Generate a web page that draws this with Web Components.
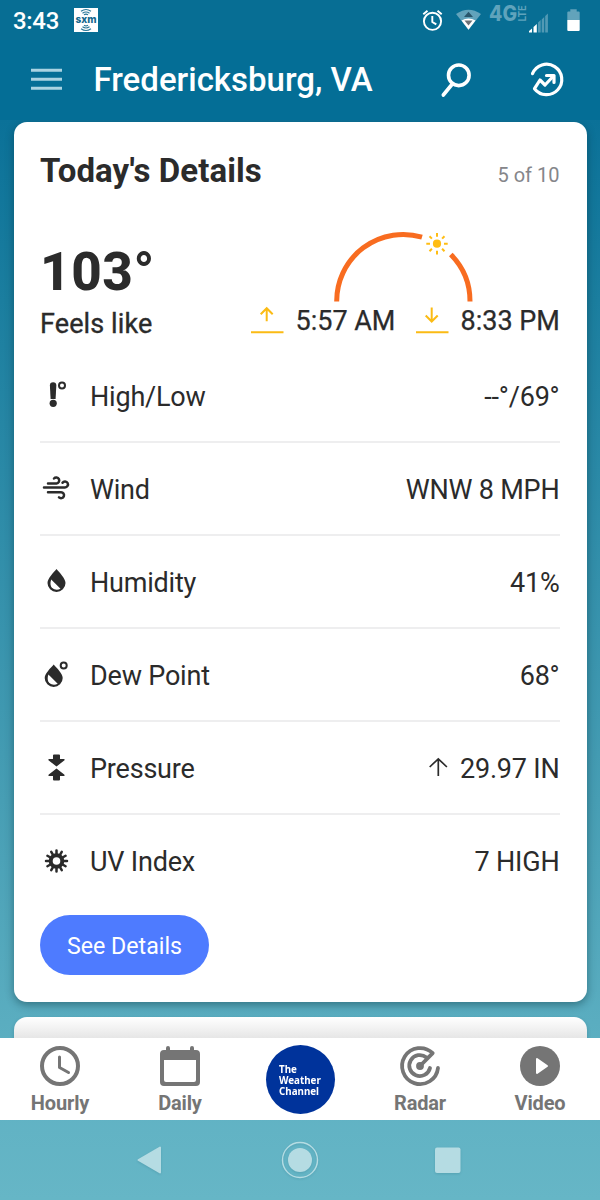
<!DOCTYPE html>
<html lang="en">
<head>
<meta charset="utf-8">
<title>Weather details</title>
<style>
html, body { margin: 0; height: 100%; }
body { font-family: Roboto, "Liberation Sans", sans-serif; color: #2b2b2b; }
</style>
</head>
<body>
<weather-app></weather-app>
<script>
const define = (name, html) => {
  const template = document.createElement('template');
  template.innerHTML = '<style>*{box-sizing:border-box}svg{display:block;flex:none;overflow:visible}</style>' + html;
  customElements.define(name, class extends HTMLElement {
    constructor() {
      super();
      this.attachShadow({ mode: 'open' }).append(template.content.cloneNode(true));
    }
  });
};

define('status-bar', `
<style>
:host { display: flex; height: 40px; padding: 0 19px 0 13px; color: #fff; background: #076e94; }
time { font-size: 24px; font-weight: 500; line-height: 42px; width: 61px; letter-spacing: -.3px; white-space: nowrap; }
.left { flex: 1; }
</style>
<time>3:43</time>
<svg class="sxm" width="24" height="40" viewBox="74 0 24 40">
  <rect x="74" y="8" width="24" height="24" fill="#fff"/>
  <g fill="none" stroke="#2a7899" stroke-width="1.1">
    <path d="M81 11.3q5-3.5 10 0M82.500 13.200q3.500-2.300 7 0M84 14.800q2-1.400 4 0M81 28.700q5 3.500 10 0M82.500 26.800q3.500 2.300 7 0M84 25.200q2 1.400 4 0"/>
  </g>
  <text x="86" y="23" text-anchor="middle" textLength="21" lengthAdjust="spacingAndGlyphs" font-family="Inter, sans-serif" font-size="10.500" font-weight="800" fill="#15698e">sxm</text>
</svg>
<span class="left"></span>
<svg width="159" height="40" viewBox="422 0 159 40">
  <g fill="none" stroke="#fff" stroke-width="1.900">
    <circle cx="432.500" cy="21.300" r="8.600"/>
    <path d="M432.300 16v6l4 2.400M423.300 14.300l4.200-3.600M441.700 14.300l-4.200-3.600"/>
  </g>
  <path d="M456 14q12.500-8.600 25 0L468.500 29.800z" fill="#62a3bb"/>
  <path d="M461.500 20.500q7-4 14 0l-7 9.300z" fill="#fff"/>
  <path d="M468.500 11.800l4.500 5.200h-9z" fill="#29566b"/>
  <path d="M464.500 20.500h8l-4 5z" fill="#6b7075"/>
  <g fill="#5fa3bc">
    <text x="489" y="21" font-size="21" font-weight="800" font-family="Inter, sans-serif" textLength="28" lengthAdjust="spacingAndGlyphs">4G</text>
    <text transform="translate(525.500 21.500) rotate(-90)" font-size="10" font-weight="700" textLength="16" lengthAdjust="spacingAndGlyphs">LTE</text>
  </g>
  <path d="M529 32.500v-1.500l3-2.500v4zM533.500 32.500v-5.500l3.300-3v8.500z" fill="#fff"/>
  <path d="M538 32.500v-10l2.700-2.500v12.500zM541.700 32.500v-13l2.500-2.500v15.500zM545.200 32.500v-16.500l2.700-2.500v19z" fill="#5199b4"/>
  <path d="M567.300 20v-7.500q0-1 1-1h2v-2.300h6.400v2.300h2q1 0 1 1V20z" fill="#62a3bb"/>
  <path d="M567.300 20h12.400v10q0 1-1 1h-10.400q-1 0-1-1z" fill="#fff"/>
</svg>`);

define('app-header', `
<style>
:host { display: flex; align-items: center; height: 80px; padding: 0 36px 0 31px; color: #fff; background: #046e96; }
h1 { flex: 1; margin: 0 0 0 30.500px; font-size: 33px; font-weight: 500; line-height: 80px; height: 80px; white-space: nowrap; }
.go { margin-left: 60px; }
</style>
<svg width="32" height="80" viewBox="31 40 32 80"><path d="M31 70.300h31M31 79.300h31M31 88.300h31" stroke="#a9d3e2" stroke-width="3"/></svg>
<h1>Fredericksburg, VA</h1>
<svg width="30" height="80" viewBox="441 40 30 80" fill="none" stroke="#fff" stroke-width="3.600" stroke-linecap="round"><circle cx="458.800" cy="75.300" r="10.300"/><path d="M452.300 84l-9 11"/></svg>
<svg class="go" width="33" height="80" viewBox="531 40 33 80" fill="none" stroke="#fff" stroke-width="3.200" stroke-linecap="round" stroke-linejoin="round"><path d="M532.500 73.700A15.200 15.200 0 1 1 534.500 88.700L540 80l5 5 8.500-9"/><path d="M546.500 75.500h7.500v7"/></svg>`);

define('sun-times', `
<style>
:host { display: flex; flex-direction: column; width: 310px; }
.times { display: flex; align-items: flex-start; justify-content: flex-end; font-size: 27px; font-weight: 400; line-height: 33px; white-space: nowrap; -webkit-text-stroke: .25px; }
.rise { width: 99px; margin: 0 21px 0 12px; }
.set { width: 99px; margin-left: 12px; }
</style>
<svg width="310" height="80" viewBox="250 225 310 80">
  <g fill="none" stroke="#f86c20" stroke-width="5"><path d="M336.700 301.400A66.500 66.500 0 0 1 422 237.200M450.800 254.500A66.500 66.500 0 0 1 470 301.400"/></g>
  <circle cx="437" cy="243.700" r="4.100" fill="#ffbd13"/>
  <path d="M437 233v3.700M437 250.700v3.700M426.300 243.700h3.700M444 243.700h3.700M429.500 236.200l2.400 2.400M442.100 248.800l2.400 2.400M444.500 236.200l-2.400 2.400M431.900 248.800l-2.400 2.400" stroke="#ffbd13" stroke-width="2"/>
</svg>
<div class="times">
  <svg width="33" height="32" viewBox="251 305 33 32" fill="none" stroke="#fbbb14" stroke-width="2"><path d="M251 332.300h32.500M266.700 321.300v-13M260.700 314.200l6-6 6 6"/></svg>
  <span class="rise">5:57 AM</span>
  <svg width="33" height="32" viewBox="416 305 33 32" fill="none" stroke="#fbbb14" stroke-width="2"><path d="M416 332.300h32.500M431.700 307.500v13.500M425.700 315.500l6 6 6-6"/></svg>
  <span class="set">8:33 PM</span>
</div>`);

define('detail-row', `
<style>
:host { display: flex; align-items: center; height: 93.100px; border-bottom: 2px solid #eeeeef; font-size: 27px; line-height: 32px; letter-spacing: -.2px; white-space: nowrap; }
:host([last]) { border-bottom-color: transparent; }
.icon { width: 50px; }
.label { flex: 1; padding-top: 3px; }
.value { display: flex; align-items: center; padding-top: 3px; }
</style>
<span class="icon"><slot name="icon"></slot></span><span class="label"><slot name="label"></slot></span><span class="value"><slot></slot></span>`);

define('details-card', `
<style>
:host { display: flex; flex-direction: column; flex: none; height: 879.500px; padding: 0 27px 0 26.500px; background: #fff; border-radius: 13px; box-shadow: 0 3px 8px rgba(0,40,50,.42); }
header { display: flex; justify-content: space-between; align-items: baseline; height: 98px; padding-top: 28px; white-space: nowrap; }
h2 { margin: 0; font-size: 33px; line-height: 42px; font-weight: 700; letter-spacing: .08px; }
.count { font-size: 20px; color: #85868a; }
.summary { display: flex; justify-content: space-between; height: 129.700px; padding-top: 5px; }
.temp { margin-top: 20px; font-size: 53px; line-height: 54px; font-weight: 800; letter-spacing: .6px; white-space: nowrap; }
.feels { margin-top: 10px; font-size: 27px; line-height: 30px; -webkit-text-stroke: .35px; letter-spacing: .1px; white-space: nowrap; }
button { align-self: flex-start; width: 169px; height: 60px; margin-top: 7px; padding: 2px 0 0; border: 0; border-radius: 30px; color: #fff; background: #4e7bff; font: 400 23.200px Roboto, sans-serif; white-space: nowrap; }
</style>
<header><h2>Today's Details</h2><span class="count">5 of 10</span></header>
<div class="summary">
  <div><div class="temp">103°</div><div class="feels">Feels like</div></div>
  <sun-times></sun-times>
</div>
<detail-row>
  <svg slot="icon" width="32" height="30" viewBox="40 381 32 30"><path d="M49.900 386.500q0-3.200 3.200-3.200t3.200 3.200l-.7 13.500h-5z" fill="#2b2b2b"/><circle cx="53.200" cy="404.300" r="3.600" fill="#2b2b2b"/><circle cx="62" cy="386.500" r="3" fill="none" stroke="#2b2b2b" stroke-width="2"/></svg>
  <span slot="label">High/Low</span>--°/69°
</detail-row>
<detail-row>
  <svg slot="icon" width="32" height="30" viewBox="40 473.500 32 30" fill="none" stroke="#2b2b2b" stroke-width="2.500" stroke-linecap="round"><path d="M48 484h8.500a3 3 0 1 0-2.500-5M44 487.900h21a3 3 0 1 0-2.500-4.700M48 492.700h13a3 3 0 1 1-2 5.200"/></svg>
  <span slot="label">Wind</span>WNW 8 MPH
</detail-row>
<detail-row>
  <svg slot="icon" width="32" height="30" viewBox="40 566.500 32 30"><path d="M56.500 569.500c3 3.500 9 9.500 9 14a9 9 0 0 1-18 0c0-4.500 6-10.500 9-14z" fill="#2b2b2b"/><path d="M51.200 580l9.300 9.300c-4.500 2.500-10 0-10-5q0-2.300.7-4.300z" fill="#fff"/></svg>
  <span slot="label">Humidity</span>41%
</detail-row>
<detail-row>
  <svg slot="icon" width="32" height="30" viewBox="40 659 32 30"><path d="M53.700 663.500c3 3.500 9 9 9 13.500a9 9 0 0 1-18 0c0-4.500 6-10 9-13.500z" fill="#2b2b2b"/><path d="M48.400 673.500l9.300 9.300c-4.500 2.500-10 0-10-5q0-2.300.7-4.300z" fill="#fff"/><circle cx="63.700" cy="664.500" r="3" fill="none" stroke="#2b2b2b" stroke-width="2"/></svg>
  <span slot="label">Dew Point</span>68°
</detail-row>
<detail-row>
  <svg slot="icon" width="32" height="30" viewBox="40 752.500 32 30"><path d="M53 755q0-1 1-1h5q1 0 1 1v3.500h4q1.200.500.200 1.500l-7.700 6-7.700-6q-1-1 .200-1.500h4zM53 779q0 1 1 1h5q1 0 1-1v-3.500h4q1.200-.500.200-1.500l-7.700-6-7.700 6q-1 1 .200 1.500h4z" fill="#2b2b2b"/></svg>
  <span slot="label">Pressure</span><svg width="32" height="26" viewBox="428 755.500 32 26" fill="none" stroke="#2b2b2b" stroke-width="1.700"><path d="M438.300 775.500v-17M429.700 766.500l8.600-8.200 8.600 8.200"/></svg><span>29.97 IN</span>
</detail-row>
<detail-row last>
  <svg slot="icon" width="32" height="30" viewBox="40 845.500 32 30" fill="none" stroke="#2b2b2b"><circle cx="56.500" cy="860.500" r="5.800" stroke-width="4"/><g stroke-width="2.500" stroke-linecap="round"><path d="M56.500 850v21M46 860.500h21M51.250 851.400l10.500 18.200M47.400 855.250l18.200 10.500M47.400 865.750l18.200-10.500M51.250 869.600l10.500-18.200"/></g><circle cx="56.500" cy="860.500" r="3.800" fill="#fff" stroke="none"/></svg>
  <span slot="label">UV Index</span>7 HIGH
</detail-row>
<button>See Details</button>`);

define('nav-item', `
<style>
:host { display: flex; flex-direction: column; align-items: center; width: 120px; padding-top: 8px; color: #757575; font-size: 20px; font-weight: 700; line-height: 24px; letter-spacing: -.15px; }
.name { margin-top: 5px; white-space: nowrap; }
</style>
<slot name="icon"></slot><span class="name"><slot></slot></span>`);

define('bottom-nav', `
<style>
:host { display: flex; height: 82px; background: #fff; }
.brand { display: flex; justify-content: center; width: 120px; padding-top: 7px; }
.disc { width: 69px; height: 69px; padding: 18px 0 0 13.500px; border-radius: 50%; background: #00339b; color: #fff; font: 700 11px/11px "Noto Sans", sans-serif; white-space: nowrap; }
.words { transform: scaleX(.89); transform-origin: left; }
</style>
<nav-item><svg slot="icon" width="40" height="40" viewBox="0 0 40 40" fill="none" stroke="#757575"><circle cx="20" cy="20" r="18" stroke-width="4"/><path d="M19.500 11v10.500l9 5" stroke-width="3" stroke-linecap="round" stroke-linejoin="round"/></svg>Hourly</nav-item>
<nav-item><svg slot="icon" width="40" height="40" viewBox="0 0 40 40"><path fill-rule="evenodd" fill="#757575" d="M6 2q0-2 2-2t2 2v2h20V2q0-2 2-2t2 2v2h2q4 0 4 4v28q0 4-4 4H4q-4 0-4-4V8q0-4 4-4h2zM4 14v20q0 2 2 2h28q2 0 2-2V14z"/></svg>Daily</nav-item>
<div class="brand"><div class="disc"><div class="words">The<br>Weather<br>Channel</div></div></div>
<nav-item><svg slot="icon" width="40" height="40" viewBox="0 0 40 40" fill="none" stroke="#757575" stroke-width="3.800" stroke-linecap="round" stroke-linejoin="round"><path d="M20 20L32.700 7.200A18 18 0 1 0 38 22M26.500 11.500A10.500 10.500 0 1 0 30 22"/><circle cx="20" cy="20" r="2"/></svg>Radar</nav-item>
<nav-item><svg slot="icon" width="40" height="40" viewBox="0 0 40 40"><circle cx="20" cy="20" r="20" fill="#757575"/><path d="M17 13l10 7-10 7z" fill="#fff" stroke="#fff" stroke-width="2" stroke-linejoin="round"/></svg>Video</nav-item>`);

define('system-nav', `
<style>
:host { display: flex; align-items: center; justify-content: center; height: 80px; }
svg { filter: drop-shadow(0 1px 1px rgba(0,60,80,.15)); }
</style>
<svg width="600" height="80" viewBox="0 0 600 80"><path d="M138.500 40L160 27.500v25z" fill="#b5dce3" stroke="#b5dce3" stroke-width="2" stroke-linejoin="round"/><circle cx="300" cy="40" r="17.500" fill="none" stroke="#b5dce3" stroke-width="1.400"/><circle cx="300" cy="40" r="12" fill="#b5dce3"/><rect x="435" y="27.500" width="25.500" height="25.500" rx="2" fill="#b5dce3"/></svg>`);

define('weather-app', `
<style>
:host { display: flex; flex-direction: column; width: 600px; height: 1200px; overflow: hidden; background: linear-gradient(#086e96 0, #0b7198 120px, #1b7e9f 300px, #479eb4 800px, #5fb1c3 1080px, #66b6c6 1200px); }
main { display: flex; flex-direction: column; flex: 1; overflow: hidden; padding: 2px 13.500px 0; gap: 15.500px; }
.next { flex: none; height: 60px; border-radius: 13px; background: linear-gradient(#fff 0, #f7f7f7 7px, #e6e6e6 21px); box-shadow: 0 2px 4px rgba(0,40,50,.2); }
</style>
<status-bar></status-bar>
<app-header></app-header>
<main><details-card></details-card><div class="next"></div></main>
<bottom-nav></bottom-nav>
<system-nav></system-nav>`);
</script>
</body>
</html>
